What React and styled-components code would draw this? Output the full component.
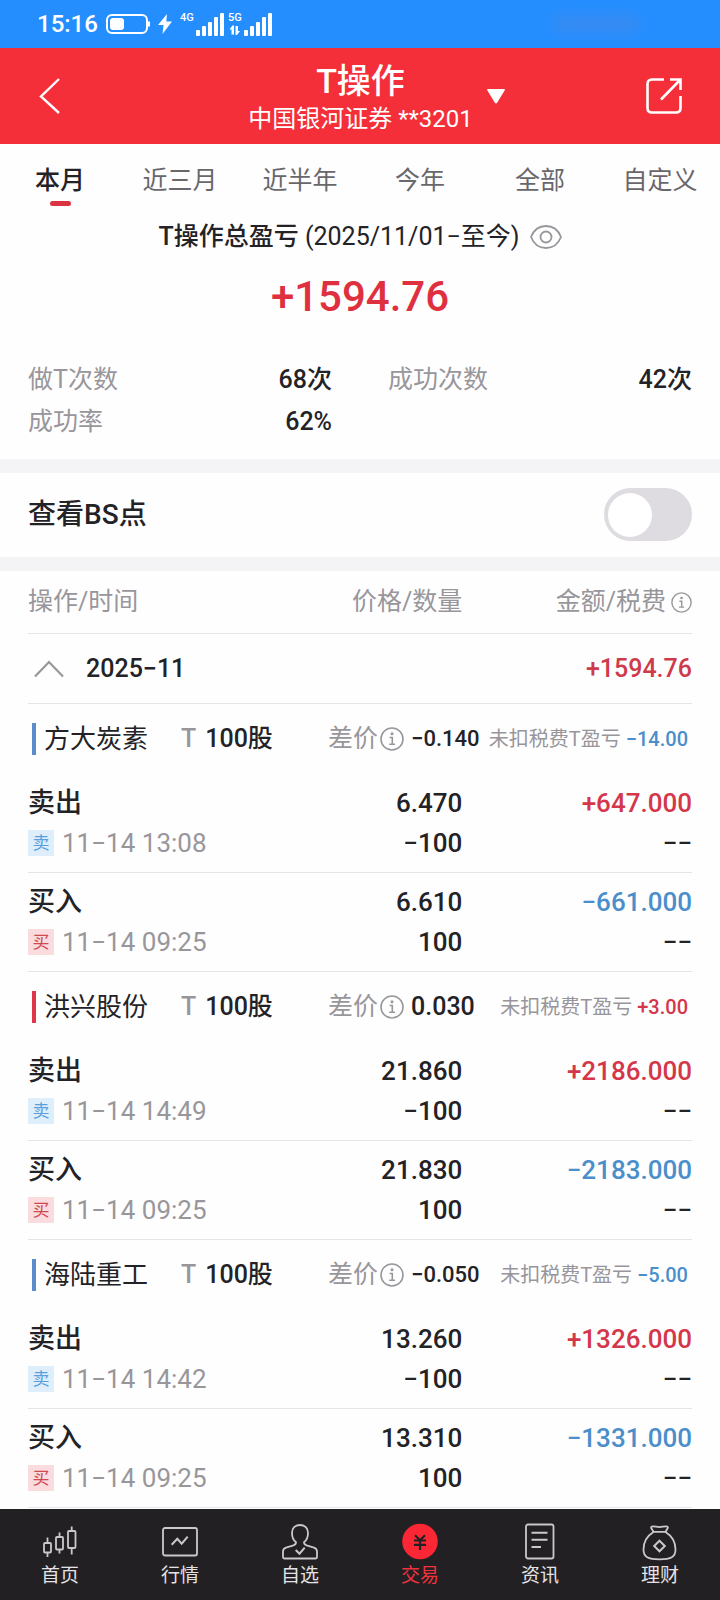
import { useState } from 'react';
import styled, { createGlobalStyle } from 'styled-components';

const periods = ['本月', '近三月', '近半年', '今年', '全部', '自定义'];

const stocks = [
  {
    name: '方大炭素',
    shares: '100股',
    diff: '−0.140',
    profit: '−14.00',
    trades: [
      { side: 'sell', time: '11−14 13:08', price: '6.470', count: '−100', amount: '+647.000' },
      { side: 'buy', time: '11−14 09:25', price: '6.610', count: '100', amount: '−661.000' },
    ],
  },
  {
    name: '洪兴股份',
    shares: '100股',
    diff: '0.030',
    profit: '+3.00',
    trades: [
      { side: 'sell', time: '11−14 14:49', price: '21.860', count: '−100', amount: '+2186.000' },
      { side: 'buy', time: '11−14 09:25', price: '21.830', count: '100', amount: '−2183.000' },
    ],
  },
  {
    name: '海陆重工',
    shares: '100股',
    diff: '−0.050',
    profit: '−5.00',
    trades: [
      { side: 'sell', time: '11−14 14:42', price: '13.260', count: '−100', amount: '+1326.000' },
      { side: 'buy', time: '11−14 09:25', price: '13.310', count: '100', amount: '−1331.000' },
    ],
  },
];

const isGain = (value) => value.startsWith('+');

function Signal({ label, data }) {
  return (
    <svg width="44" height="26" viewBox="0 0 44 26" fill="#fff">
      <text x="0" y="10" fontSize="11" fontWeight="500">{label}</text>
      {data && (
        <path d="M4.500 14.500L1.500 18.500H3.500V23.500H6V14.500zM9 24L12 20H10V15H7.500V24z" />
      )}
      <rect x="16" y="19" width="4" height="6" rx="1" />
      <rect x="22" y="15" width="4" height="10" rx="1" />
      <rect x="28" y="11" width="4" height="14" rx="1" />
      <rect x="34" y="6" width="4" height="19" rx="1" />
      <rect x="40" y="2" width="4" height="23" rx="1" />
    </svg>
  );
}

function InfoIcon({ size }) {
  return (
    <svg width={size} height={size} viewBox="0 0 24 24" fill="none" stroke="#98969b" strokeWidth="1.6">
      <circle cx="12" cy="12" r="11" />
      <circle cx="12" cy="6.8" r="1.5" fill="#98969b" stroke="none" />
      <path d="M9.6 10.5H12.3V17M9.2 17.3h5.8" />
    </svg>
  );
}

const navItems = [
  {
    label: '首页',
    icon: (
      <>
        <rect x="2" y="20" width="7" height="9.5" rx="1" />
        <rect x="14" y="14" width="7" height="12.5" rx="1" />
        <rect x="26" y="8" width="7.5" height="17" rx="1" />
        <path d="M5.5 14.5V20M5.5 29.5V34M17.5 9.5V14M17.5 26.5V30.5M29.7 3.5V8M29.7 25V31.5" />
      </>
    ),
  },
  {
    label: '行情',
    icon: (
      <>
        <rect x="1" y="5" width="34" height="27.5" rx="2" />
        <path d="M9.7 21.7L15.3 15.8L19.7 20.7L25.7 13.7" strokeWidth="2" />
      </>
    ),
  },
  {
    label: '自选',
    icon: (
      <>
        <path d="M18 2C13 2 10 5.3 10 10c0 4 1.5 7.3 4 9.3 0 1.8-.7 2.5-2.5 3L4 24.6c-2 .6-3 1.8-3 4V34.3q0 1.2 1.2 1.2H33.8q1.2 0 1.2-1.2V28.6c0-2.200-1-3.400-3-4L24.5 22.3c-1.8-.5-2.5-1.2-2.5-3 2.500-2 4-5.300 4-9.300 0-4.700-3-8-8-8z" />
        <path d="M13.7 27L17.5 30.7L22.7 24.7" strokeWidth="2" />
      </>
    ),
  },
  {
    label: '交易',
    active: true,
    icon: (
      <>
        <circle cx="18" cy="18.5" r="17.8" fill="#fb2734" stroke="none" />
        <path d="M13 12.3L18 17.3L23 12.3M12 17.5H24M12 21.8H24M18 17V27" stroke="#232023" strokeWidth="2.2" />
      </>
    ),
  },
  {
    label: '资讯',
    icon: (
      <>
        <rect x="4" y="1.5" width="27.5" height="34" rx="2" />
        <path d="M9.5 9.7H25.5M9.5 16.7H25.5M9.5 24H19" strokeWidth="2" />
      </>
    ),
  },
  {
    label: '理财',
    icon: (
      <>
        <path d="M11.5 8.8L9.3 5.3C8.7 4 9.5 3.3 10.8 3.3c2.500 0 4 .8 6.700.8s4.200-.8 6.700-.8c1.300 0 2.100.7 1.500 2L23.5 8.8z" />
        <path d="M11.500 9C5 13 1.500 20 1.500 26.500c0 7.500 4.500 9.800 16 9.800s16-2.300 16-9.800C33.500 20 30 13 23.500 9" />
        <path d="M17.500 17.700L22.800 23L17.500 28.300L12.200 23z" strokeWidth="2" />
      </>
    ),
  },
];

function TradeRow({ trade }) {
  const sell = trade.side === 'sell';
  return (
    <TradeLine>
      <td>
        <Action>{sell ? '卖出' : '买入'}</Action>
        <Time>
          <Badge $sell={sell}>{sell ? '卖' : '买'}</Badge>
          {trade.time}
        </Time>
      </td>
      <NumberCell>
        <div>{trade.price}</div>
        <div>{trade.count}</div>
      </NumberCell>
      <NumberCell>
        <Amount $gain={isGain(trade.amount)}>{trade.amount}</Amount>
        <div>−−</div>
      </NumberCell>
    </TradeLine>
  );
}

function App() {
  const [period, setPeriod] = useState('本月');
  const [showBs, setShowBs] = useState(false);
  const [open, setOpen] = useState(true);

  return (
    <Page>
      <GlobalStyle />
      <StatusBar>
        <Clock>15:16</Clock>
        <svg width="44" height="20" viewBox="0 0 44 20" fill="none" stroke="#fff">
          <rect x="1" y="1" width="40" height="18" rx="5" strokeWidth="2" />
          <rect x="4" y="4" width="14" height="12" rx="3" fill="#fff" stroke="none" />
          <path d="M43 7.5v5" strokeWidth="2" />
        </svg>
        <svg width="14" height="20" viewBox="0 0 14 20" fill="#fff">
          <path d="M9 0L0 11h5.5L4.5 20L14 7.5H8.3z" />
        </svg>
        <Signals>
          <Signal label="4G" />
          <Signal label="5G" data />
        </Signals>
        <Smudge />
      </StatusBar>

      <Header>
        <IconButton aria-label="返回">
          <svg width="22" height="36" viewBox="0 0 22 36" fill="none" stroke="#fff" strokeWidth="2.4">
            <path d="M20 1L2 18.500L20 35" />
          </svg>
        </IconButton>
        <Heading>
          <Title>T操作</Title>
          <Account>中国银河证券 **3201</Account>
        </Heading>
        <HeaderRight>
          <IconButton aria-label="切换账户">
            <svg width="18" height="15" viewBox="0 0 18 15" fill="#fff">
              <path d="M1 0H17q1.500 0 .6 1.500L10.300 13.500q-1.300 1.800-2.600 0L.4 1.500Q-.5 0 1 0z" />
            </svg>
          </IconButton>
          <IconButton aria-label="分享">
            <svg width="36" height="36" viewBox="0 0 36 36" fill="none" stroke="#fff" strokeWidth="2.6">
              <path d="M18 1.500H6Q1.500 1.500 1.500 6V30Q1.500 34.500 6 34.500H30Q34.500 34.500 34.500 30V18" />
              <path d="M24 1.500H34.500V12M34 2L15 21.500" />
            </svg>
          </IconButton>
        </HeaderRight>
      </Header>

      <Tabs>
        {periods.map((item) => (
          <Tab key={item} $active={item === period} onClick={() => setPeriod(item)}>
            {item}
          </Tab>
        ))}
      </Tabs>

      <Summary>
        <SummaryTitle>
          <span>
            <b>T操作总盈亏</b> (2025/11/01−至今)
          </span>
          <IconButton aria-label="隐藏金额">
            <svg width="32" height="24" viewBox="0 0 32 24" fill="none" stroke="#98969b" strokeWidth="1.8">
              <path d="M1 12C4 4.500 9.500 1 16 1s12 3.500 15 11c-3 7.500-8.500 11-15 11S4 19.500 1 12z" />
              <circle cx="16" cy="12" r="5.5" />
            </svg>
          </IconButton>
        </SummaryTitle>
        <Total>+1594.76</Total>
        <Stats>
          <Stat><dt>做T次数</dt><dd>68次</dd></Stat>
          <Stat><dt>成功次数</dt><dd>42次</dd></Stat>
          <Stat><dt>成功率</dt><dd>62%</dd></Stat>
        </Stats>
      </Summary>

      <SwitchRow>
        <label htmlFor="bs">查看BS点</label>
        <Switch id="bs" type="checkbox" checked={showBs} onChange={(e) => setShowBs(e.target.checked)} />
      </SwitchRow>

      <Records>
        <Table>
          <colgroup>
            <Col $width="35%" />
            <Col $width="30.4%" />
            <Col $width="34.6%" />
          </colgroup>
          <thead>
            <HeadLine>
              <th>操作/时间</th>
              <th>价格/数量</th>
              <th>
                <HeadInfo>金额/税费<InfoIcon size={21} /></HeadInfo>
              </th>
            </HeadLine>
          </thead>
          <tbody>
            <tr>
              <WideCell colSpan={3} $line>
                <Month onClick={() => setOpen(!open)}>
                  <svg width="30" height="18" viewBox="0 0 30 18" fill="none" stroke="#98969b" strokeWidth="2.2">
                    <path d="M1 16.500L15 2L29 16.500" />
                  </svg>
                  <span>2025−11</span>
                  <MonthTotal>+1594.76</MonthTotal>
                </Month>
              </WideCell>
            </tr>
          </tbody>
          {open && stocks.map((stock) => (
            <tbody key={stock.name}>
              <tr>
                <WideCell colSpan={3}>
                  <Stock>
                    <StockName $gain={isGain(stock.profit)}>{stock.name}</StockName>
                    <Shares><i>T</i>{stock.shares}</Shares>
                    <Diff $small={stock.diff.length > 5}>
                      差价<InfoIcon size={24} /><span>{stock.diff}</span>
                    </Diff>
                    <Profit>
                      未扣税费T盈亏 <Amount as="span" $gain={isGain(stock.profit)}>{stock.profit}</Amount>
                    </Profit>
                  </Stock>
                </WideCell>
              </tr>
              {stock.trades.map((trade) => <TradeRow key={trade.side} trade={trade} />)}
            </tbody>
          ))}
        </Table>
      </Records>

      <Nav>
        {navItems.map((item) => (
          <NavLink href="#" key={item.label} $active={item.active}>
            <svg width="36" height="36" viewBox="0 0 36 36" overflow="visible" fill="none" stroke="#c9c8ca" strokeWidth="1.8">
              {item.icon}
            </svg>
            {item.label}
          </NavLink>
        ))}
      </Nav>
    </Page>
  );
}

const GlobalStyle = createGlobalStyle`
  *{
    box-sizing:border-box;
  }
  body{
    margin:0;
    background:#fefefe;
    color:#232226;
    font-family:Roboto, "Noto Sans CJK SC", sans-serif;
    font-size:25px;
  }
  button{
    padding:0;
    border:0;
    background:none;
    color:inherit;
    font:inherit;
    cursor:pointer;
  }
  svg{
    display:block;
    flex:none;
  }
`;

const Page = styled.div`
  display:flex;
  flex-direction:column;
  min-height:100vh;
`;

const StatusBar = styled.div`
  display:flex;
  align-items:center;
  height:48px;
  padding:0 80px 0 37px;
  background:#258eff;
  color:#fff;
  gap:8px;
`;

const Clock = styled.span`
  font-size:24px;
  line-height:48px;
  font-weight:500;
`;

const Signals = styled.div`
  display:flex;
  gap:4px;
`;

const Smudge = styled.div`
  width:88px;
  height:20px;
  margin-left:auto;
  border-radius:10px;
  background:#348bf2;
  filter:blur(6px);
`;

const Header = styled.header`
  display:grid;
  grid-template-columns:1fr auto 1fr;
  align-items:center;
  padding:0 38px 0 39px;
  background:#f42f39;
  color:#fff;
  text-align:center;
`;

const IconButton = styled.button`
  display:flex;
  align-items:center;
`;

const Heading = styled.div`
  padding:12px 0 8px;
`;

const Title = styled.h1`
  margin:0;
  font-size:34px;
  line-height:42px;
  font-weight:500;
`;

const Account = styled.div`
  font-size:24px;
  line-height:34px;
`;

const HeaderRight = styled.div`
  display:flex;
  justify-content:space-between;
  align-items:center;
  padding-left:14px;
`;

const Tabs = styled.nav`
  display:grid;
  grid-template-columns:repeat(6, 1fr);
`;

const Tab = styled.button`
  display:flex;
  flex-direction:column;
  align-items:center;
  padding-top:21px;
  line-height:32px;
  color:${(p) => (p.$active ? '#232226' : '#69676b')};
  font-weight:${(p) => (p.$active ? 500 : 400)};

  &::after{
    content:"";
    width:21px;
    height:5px;
    margin-top:4px;
    border-radius:3px;
    background:${(p) => (p.$active ? '#dc3341' : 'transparent')};
  }
`;

const Summary = styled.section`
  padding:12px 28px 16px;
`;

const SummaryTitle = styled.div`
  display:flex;
  justify-content:center;
  align-items:center;
  gap:10px;
  line-height:38px;

  b{
    font-weight:500;
  }
`;

const Total = styled.div`
  margin:16px 0 37px;
  color:#df3040;
  font-size:42px;
  line-height:50px;
  font-weight:500;
  text-align:center;
`;

const Stats = styled.dl`
  display:grid;
  grid-template-columns:1fr 1fr;
  column-gap:56px;
  margin:0;
  line-height:42px;
`;

const Stat = styled.div`
  display:flex;
  justify-content:space-between;

  dt{
    color:#98969b;
  }
  dd{
    margin:0;
    font-weight:500;
  }
`;

const SwitchRow = styled.section`
  display:flex;
  justify-content:space-between;
  align-items:center;
  padding:15px 28px 16px;
  border:solid #f4f3f5;
  border-width:14px 0;
  font-size:28px;
  line-height:40px;
  font-weight:500;
`;

const Switch = styled.input`
  appearance:none;
  display:flex;
  align-items:center;
  width:88px;
  height:53px;
  margin:0;
  padding:0 4px;
  border-radius:27px;
  background:${(p) => (p.checked ? '#f42f39' : '#dedce0')};
  justify-content:${(p) => (p.checked ? 'flex-end' : 'flex-start')};
  cursor:pointer;

  &::before{
    content:"";
    width:44px;
    height:44px;
    border-radius:50%;
    background:#fff;
  }
`;

const Records = styled.section`
  flex:1;
  padding:0 28px;
`;

const Table = styled.table`
  width:100%;
  table-layout:fixed;
  border-spacing:0;

  td, th{
    padding:0;
  }
`;

const Col = styled.col`
  width:${(p) => p.$width};
`;

const HeadLine = styled.tr`
  color:#98969b;
  line-height:62px;

  th{
    border-bottom:1px solid #e6e5e7;
    font-weight:400;
    text-align:right;
  }
  th:first-child{
    text-align:left;
  }
`;

const HeadInfo = styled.div`
  display:flex;
  justify-content:flex-end;
  align-items:center;
  gap:5px;
`;

const WideCell = styled.td`
  border-bottom:${(p) => (p.$line ? '1px solid #e6e5e7' : '0')};
`;

const Month = styled.button`
  display:flex;
  align-items:center;
  gap:22px;
  width:100%;
  height:69px;
  padding-left:6px;
  font-weight:500;
`;

const MonthTotal = styled.span`
  margin-left:auto;
  color:#cf3a4b;
`;

const Stock = styled.div`
  display:grid;
  grid-template-columns:149px 147px auto 1fr;
  align-items:center;
  height:70px;
  padding:0 4px;
  line-height:32px;
  white-space:nowrap;
`;

const StockName = styled.div`
  padding-left:8px;
  border-left:4px solid ${(p) => (p.$gain ? '#e0364a' : '#5b8dcc')};
  font-size:26px;
`;

const Shares = styled.div`
  display:flex;
  align-items:baseline;
  gap:9px;
  font-weight:500;

  i{
    color:#98969b;
    font-style:normal;
  }
`;

const Diff = styled.div`
  display:flex;
  align-items:center;
  gap:2px;
  color:#98969b;

  span{
    margin-left:5px;
    color:#232226;
    font-size:${(p) => (p.$small ? '22px' : '25px')};
    font-weight:500;
  }
`;

const Profit = styled.div`
  color:#98969b;
  font-size:20px;
  text-align:right;
`;

const Amount = styled.div`
  color:${(p) => (p.$gain ? '#d4364a' : '#4a8ecb')};
  font-weight:500;
`;

const TradeLine = styled.tr`
  line-height:40px;

  td{
    padding:9px 0;
    border-bottom:1px solid #e6e5e7;
  }
`;

const Action = styled.div`
  font-size:27px;
  font-weight:500;
`;

const Time = styled.div`
  display:flex;
  align-items:center;
  gap:8px;
  color:#98969b;
  font-size:26px;
`;

const Badge = styled.span`
  width:26px;
  background:${(p) => (p.$sell ? '#dfeefb' : '#fadcde')};
  color:${(p) => (p.$sell ? '#5a9fdc' : '#cf4a50')};
  font-size:17px;
  line-height:26px;
  text-align:center;
`;

const NumberCell = styled.td`
  font-size:26px;
  font-weight:500;
  text-align:right;
`;

const Nav = styled.nav`
  position:sticky;
  bottom:0;
  display:grid;
  grid-template-columns:repeat(6, 1fr);
  padding:14px 0 12px;
  background:#232023;
`;

const NavLink = styled.a`
  display:flex;
  flex-direction:column;
  align-items:center;
  gap:4px;
  color:${(p) => (p.$active ? '#f0323e' : '#e4e3e5')};
  font-size:19px;
  line-height:25px;
  text-decoration:none;
`;

export default App;
